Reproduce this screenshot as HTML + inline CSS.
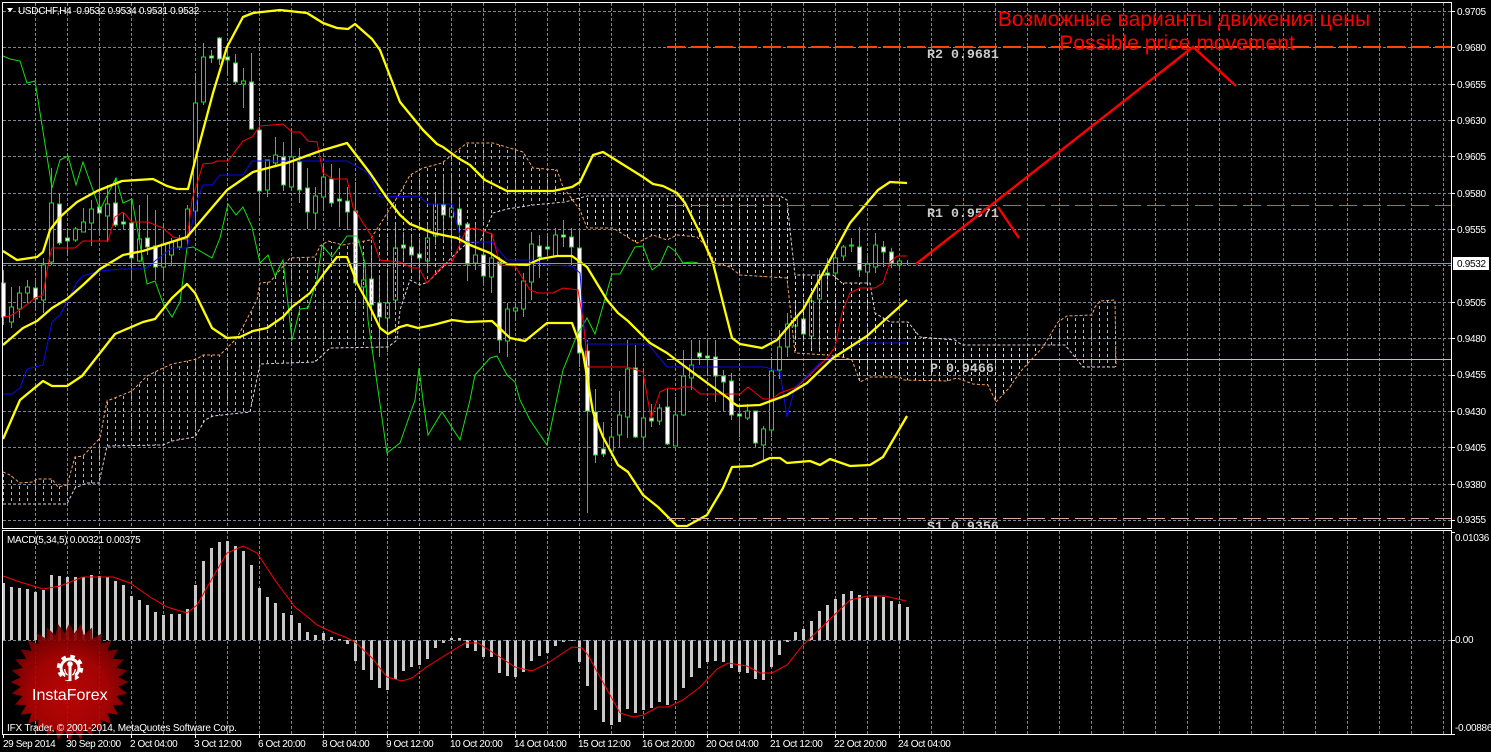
<!DOCTYPE html>
<html><head><meta charset="utf-8"><title>USDCHF,H4</title>
<style>
html,body{margin:0;padding:0;background:#000;width:1491px;height:752px;overflow:hidden}
svg{display:block}
text{font-family:"Liberation Sans",sans-serif;font-size:10px;fill:#fff;white-space:pre}
.m{font-family:"Liberation Mono",monospace;font-size:13.3px;font-weight:bold;fill:#ccc}
.r{font-family:"Liberation Sans",sans-serif;font-size:21.1px;fill:#f00}
.y{fill:none;stroke:#ff0;stroke-width:2.3;stroke-linejoin:round}
.l{fill:none;stroke-width:1}
</style></head><body>
<svg width="1491" height="752" viewBox="0 0 1491 752" xmlns="http://www.w3.org/2000/svg">
<defs>
<pattern id="ho" width="8" height="6" patternUnits="userSpaceOnUse"><rect x="3" width="1" height="3" fill="#f4a460"/></pattern>
<pattern id="hp" width="8" height="6" patternUnits="userSpaceOnUse"><rect x="3" width="1" height="3" fill="#e4cfe0"/></pattern>
<clipPath id="co"><rect x="3" y="3" width="565" height="525"/><rect x="1050" y="3" width="100" height="525"/></clipPath>
<clipPath id="cp"><rect x="568" y="3" width="482" height="525"/></clipPath>
<clipPath id="main"><rect x="3" y="3" width="1448" height="525"/></clipPath>
<radialGradient id="lg" gradientUnits="userSpaceOnUse" cx="69" cy="695" r="78"><stop offset="0" stop-color="#c80606"/><stop offset=".5" stop-color="#b00404"/><stop offset="1" stop-color="#5c0000"/></radialGradient>
</defs>
<rect width="1491" height="752" fill="#000"/>

<!-- grid -->
<path shape-rendering="crispEdges" fill="none" stroke="#778899" stroke-dasharray="3 2" d="M3 11.5H1451M3 47.5H1451M3 84.5H1451M3 120.5H1451M3 156.5H1451M3 193.5H1451M3 229.5H1451M3 265.5H1451M3 302.5H1451M3 338.5H1451M3 375.5H1451M3 411.5H1451M3 447.5H1451M3 484.5H1451M3 520.5H1451M3 640.5H1451"/>
<path shape-rendering="crispEdges" fill="none" stroke="#778899" stroke-dasharray="3 2" d="M35.5 3V528M67.5 3V528M99.5 3V528M131.5 3V528M163.5 3V528M195.5 3V528M227.5 3V528M259.5 3V528M291.5 3V528M323.5 3V528M355.5 3V528M387.5 3V528M419.5 3V528M451.5 3V528M483.5 3V528M515.5 3V528M547.5 3V528M579.5 3V528M611.5 3V528M643.5 3V528M675.5 3V528M707.5 3V528M739.5 3V528M771.5 3V528M803.5 3V528M835.5 3V528M867.5 3V528M899.5 3V528M931.5 3V528M963.5 3V528M995.5 3V528M1027.5 3V528M1059.5 3V528M1091.5 3V528M1123.5 3V528M1155.5 3V528M1187.5 3V528M1219.5 3V528M1251.5 3V528M1283.5 3V528M1315.5 3V528M1347.5 3V528M1379.5 3V528M1411.5 3V528M1443.5 3V528"/>
<path shape-rendering="crispEdges" fill="none" stroke="#778899" stroke-dasharray="3 2" d="M35.5 531V734M67.5 531V734M99.5 531V734M131.5 531V734M163.5 531V734M195.5 531V734M227.5 531V734M259.5 531V734M291.5 531V734M323.5 531V734M355.5 531V734M387.5 531V734M419.5 531V734M451.5 531V734M483.5 531V734M515.5 531V734M547.5 531V734M579.5 531V734M611.5 531V734M643.5 531V734M675.5 531V734M707.5 531V734M739.5 531V734M771.5 531V734M803.5 531V734M835.5 531V734M867.5 531V734M899.5 531V734M931.5 531V734M963.5 531V734M995.5 531V734M1027.5 531V734M1059.5 531V734M1091.5 531V734M1123.5 531V734M1155.5 531V734M1187.5 531V734M1219.5 531V734M1251.5 531V734M1283.5 531V734M1315.5 531V734M1347.5 531V734M1379.5 531V734M1411.5 531V734M1443.5 531V734"/>

<!-- candle wicks -->
<path shape-rendering="crispEdges" fill="none" stroke="#14e014" d="M3.5 270V325M11.5 287V328M19.5 286V318M27.5 280V303M35.5 280V310M43.5 258V313M51.5 168V265M59.5 193V245M67.5 230V253M75.5 227V242M83.5 208V232M91.5 200V246M99.5 170V233M107.5 185V242M115.5 178V227M123.5 213V229M131.5 200V280M139.5 205V262M147.5 195V255M155.5 210V280M163.5 223V280M171.5 238V266M179.5 235V250M187.5 205V245M195.5 75V235M203.5 43V105M211.5 50V63M219.5 37V65M227.5 45V75M235.5 54V84M243.5 68V108M251.5 53V130M259.5 117V213M267.5 160V197M275.5 137V165M283.5 142V191M291.5 129V190M299.5 148V203M307.5 168V229M315.5 187V229M323.5 165V210M331.5 164V207M339.5 168V227M347.5 187V230M355.5 182V285M363.5 262V305M371.5 245V320M379.5 275V357M387.5 270V352M395.5 225V310M403.5 232V262M411.5 237V270M419.5 240V280M427.5 223V273M435.5 193V245M443.5 177V240M451.5 177V235M459.5 197V240M467.5 223V281M475.5 223V270M483.5 230V283M491.5 233V293M499.5 257V353M507.5 303V357M515.5 302V321M523.5 273V317M531.5 232V300M539.5 235V278M547.5 236V256M555.5 228V257M563.5 220V247M571.5 228V265M579.5 230V367M587.5 340V513M595.5 389V463M603.5 422V457M611.5 427V456M619.5 391V447M627.5 340V438M635.5 345V438M643.5 370V450M651.5 404V427M659.5 404V425M667.5 389V445M675.5 397V445M683.5 350V416M691.5 340V390M699.5 340V365M707.5 340V373M715.5 340V402M723.5 370V412M731.5 373V420M739.5 403V437M747.5 404V420M755.5 411V447M763.5 426V461M771.5 357V437M779.5 330V379M787.5 313V357M795.5 300V340M803.5 310V338M811.5 295V350M819.5 270V352M827.5 258V290M835.5 250V280M843.5 245V261M851.5 238V252M859.5 227V277M867.5 255V283M875.5 233V273M883.5 241V267M891.5 248V268M899.5 260V268M907.5 260V265"/>
<!-- hollow bodies -->
<path shape-rendering="crispEdges" fill="#000" stroke="#14e014" d="M9.5 307V322h4V307zM17.5 293V309h4V293zM25.5 287V293h4V287zM41.5 265V300h4V265zM49.5 203V262h4V203zM73.5 229V240h4V229zM81.5 222V232h4V222zM89.5 209V223h4V209zM105.5 204V216h4V204zM137.5 239V261h4V239zM161.5 244V267h4V244zM169.5 242V255h4V242zM177.5 240V247h4V240zM185.5 209V237h4V209zM193.5 103V211h4V103zM201.5 57V102h4V57zM241.5 81V84h4V81zM265.5 160V190h4V160zM273.5 155V163h4V155zM289.5 157V187h4V157zM313.5 196V213h4V196zM321.5 177V197h4V177zM361.5 280V287h4V280zM385.5 303V318h4V303zM393.5 248V300h4V248zM425.5 238V261h4V238zM433.5 204V236h4V204zM449.5 208V217h4V208zM473.5 255V263h4V255zM489.5 258V277h4V258zM505.5 309V341h4V309zM513.5 308V311h4V308zM521.5 281V309h4V281zM529.5 244V282h4V244zM553.5 235V256h4V235zM609.5 437V451h4V437zM617.5 415V435h4V415zM625.5 369V417h4V369zM641.5 418V437h4V418zM657.5 408V421h4V408zM673.5 415V446h4V415zM681.5 376V415h4V376zM689.5 365V378h4V365zM745.5 411V418h4V411zM761.5 429V445h4V429zM769.5 371V430h4V371zM777.5 347V370h4V347zM785.5 324V347h4V324zM793.5 318V326h4V318zM809.5 301V336h4V301zM817.5 275V299h4V275zM833.5 258V273h4V258zM841.5 247V256h4V247zM865.5 264V272h4V264zM873.5 245V267h4V245zM897.5 261V265h4V261z"/>
<!-- filled bodies -->
<path shape-rendering="crispEdges" fill="#fff" stroke="#14e014" d="M1.5 283V317h4V283zM33.5 288V299h4V288zM57.5 204V243h4V204zM65.5 238V241h4V238zM97.5 207V213h4V207zM113.5 203V225h4V203zM121.5 222V224h4V222zM129.5 223V258h4V223zM145.5 238V247h4V238zM153.5 246V267h4V246zM209.5 56V58h4V56zM217.5 38V59h4V38zM225.5 57V60h4V57zM233.5 63V82h4V63zM249.5 82V129h4V82zM257.5 130V191h4V130zM281.5 157V185h4V157zM297.5 162V190h4V162zM305.5 188V212h4V188zM329.5 179V203h4V179zM337.5 199V201h4V199zM345.5 201V212h4V201zM353.5 211V283h4V211zM369.5 279V305h4V279zM377.5 303V317h4V303zM401.5 245V248h4V245zM409.5 247V255h4V247zM417.5 254V258h4V254zM441.5 205V215h4V205zM457.5 209V225h4V209zM465.5 224V264h4V224zM481.5 255V276h4V255zM497.5 262V340h4V262zM537.5 246V257h4V246zM545.5 247V249h4V247zM561.5 235V237h4V235zM569.5 237V247h4V237zM577.5 248V353h4V248zM585.5 351V411h4V351zM593.5 412V455h4V412zM601.5 449V454h4V449zM633.5 368V437h4V368zM649.5 418V421h4V418zM665.5 407V444h4V407zM697.5 353V357h4V353zM705.5 356V358h4V356zM713.5 357V376h4V357zM721.5 376V382h4V376zM729.5 381V415h4V381zM737.5 414V416h4V414zM753.5 411V443h4V411zM801.5 319V334h4V319zM825.5 273V275h4V273zM849.5 245V246h4V245zM857.5 247V270h4V247zM881.5 247V252h4V247zM889.5 252V263h4V252z"/>

<!-- cloud -->
<polygon clip-path="url(#co)" fill="url(#ho)" points="3,472 10,475 20,483 33,482 37,479 52,479 58,487 67,485 75,457 83,456 100,438 107,401 132,391 147,376 163,368 172,364 197,359 203,355 220,355 237,338 257,300 260,283 270,282 290,258 315,257 320,246 328,241 343,245 370,240 400,193 410,175 423,168 442,163 458,150 467,143 493,143 523,152 533,168 557,170 563,187 580,210 587,228 613,228 637,243 653,235 667,240 677,235 697,237 707,247 715,263 730,267 740,275 787,278 795,353 827,355 842,357 852,360 860,382 870,377 900,377 903,380 947,381 957,378 973,384 988,385 996,402 1010,387 1020,372 1043,347 1058,322 1067,316 1092,315 1095,307 1100,301 1115,300 1116,367 1083,367 1065,345 962,345 955,340 920,337 908,322 890,322 875,313 870,283 842,283 833,275 795,275 790,230 787,200 780,196 587,196 565,202 533,205 507,209 493,213 480,242 467,243 452,257 443,267 428,282 420,285 410,280 400,310 397,340 388,347 330,348 315,362 260,364 250,412 213,416 205,420 195,437 172,441 163,445 107,446 99,483 87,483 75,488 67,504 3,504"/>
<polygon clip-path="url(#cp)" fill="url(#hp)" points="3,472 10,475 20,483 33,482 37,479 52,479 58,487 67,485 75,457 83,456 100,438 107,401 132,391 147,376 163,368 172,364 197,359 203,355 220,355 237,338 257,300 260,283 270,282 290,258 315,257 320,246 328,241 343,245 370,240 400,193 410,175 423,168 442,163 458,150 467,143 493,143 523,152 533,168 557,170 563,187 580,210 587,228 613,228 637,243 653,235 667,240 677,235 697,237 707,247 715,263 730,267 740,275 787,278 795,353 827,355 842,357 852,360 860,382 870,377 900,377 903,380 947,381 957,378 973,384 988,385 996,402 1010,387 1020,372 1043,347 1058,322 1067,316 1092,315 1095,307 1100,301 1115,300 1116,367 1083,367 1065,345 962,345 955,340 920,337 908,322 890,322 875,313 870,283 842,283 833,275 795,275 790,230 787,200 780,196 587,196 565,202 533,205 507,209 493,213 480,242 467,243 452,257 443,267 428,282 420,285 410,280 400,310 397,340 388,347 330,348 315,362 260,364 250,412 213,416 205,420 195,437 172,441 163,445 107,446 99,483 87,483 75,488 67,504 3,504"/>
<polyline class="l" stroke="#f4a460" stroke-dasharray="3 2" points="3,472 10,475 20,483 33,482 37,479 52,479 58,487 67,485 75,457 83,456 100,438 107,401 132,391 147,376 163,368 172,364 197,359 203,355 220,355 237,338 257,300 260,283 270,282 290,258 315,257 320,246 328,241 343,245 370,240 400,193 410,175 423,168 442,163 458,150 467,143 493,143 523,152 533,168 557,170 563,187 580,210 587,228 613,228 637,243 653,235 667,240 677,235 697,237 707,247 715,263 730,267 740,275 787,278 795,353 827,355 842,357 852,360 860,382 870,377 900,377 903,380 947,381 957,378 973,384 988,385 996,402 1010,387 1020,372 1043,347 1058,322 1067,316 1092,315 1095,307 1100,301 1115,300 1116,367"/>
<polyline class="l" stroke="#e4cfe0" stroke-dasharray="3 2" points="3,504 67,504 75,488 87,483 99,483 107,446 163,445 172,441 195,437 205,420 213,416 250,412 260,364 315,362 330,348 388,347 397,340 400,310 410,280 420,285 428,282 443,267 452,257 467,243 480,242 493,213 507,209 533,205 565,202 587,196 780,196 787,200 790,230 795,275 833,275 842,283 870,283 875,313 890,322 908,322 920,337 955,340 962,345 1065,345 1083,367 1116,367"/>

<!-- chikou -->
<polyline class="l" stroke="#14e014" points="3,56 10,59 20,61 27,83 35,81 52,188 60,160 68,156 76,185 83,162 100,210 116,178 123,203 132,199 147,284 155,281 163,303 172,317 180,302 187,248 193,247 212,258 220,238 228,204 236,215 243,207 252,227 260,263 268,255 275,276 283,260 292,340 300,309 308,308 317,280 322,245 332,257 347,236 357,236 365,263 368,320 387,453 400,443 415,400 419,368 423,400 428,435 442,412 460,440 470,400 475,375 490,358 497,356 507,375 515,382 520,400 530,420 547,445 563,370 577,335 587,318 595,334 612,274 620,274 635,247 643,246 652,270 660,264 668,246 675,251 683,263 692,262 698,263"/>
<!-- kijun -->
<polyline class="l" stroke="#0a0af0" points="3,394 12,394 20,388 27,369 43,365 52,322 60,315 68,300 77,282 83,276 100,271 122,269 145,269 160,257 172,248 187,248 197,200 203,185 212,185 220,175 243,175 252,161 347,161 368,173 380,197 419,196 428,204 452,204 460,236 467,242 492,242 507,260 532,260 545,265 572,266 580,273 585,337 588,344 648,344 667,367 765,367 780,372 787,417 795,387 820,363 837,355 860,343 907,343"/>
<!-- tenkan -->
<polyline class="l" stroke="#f00" points="3,317 10,316 20,310 35,298 43,295 49,260 52,248 75,248 83,241 108,241 115,217 123,212 132,222 148,222 163,228 173,237 187,240 192,200 203,164 213,163 217,161 228,161 243,141 252,137 260,126 283,124 292,132 300,132 308,141 317,142 323,173 333,179 347,179 353,207 372,237 380,260 400,262 412,268 419,268 427,283 443,265 452,262 467,228 478,229 492,234 500,265 515,266 530,290 538,293 553,293 563,288 578,290 583,320 588,367 627,367 643,372 651,418 660,392 668,388 678,389 683,387 692,387 700,394 740,394 748,387 763,399 772,399 780,393 797,387 827,358 835,347 842,313 850,293 860,288 875,288 883,283 890,262 897,256 907,256"/>

<!-- bollinger -->
<polyline class="y" points="3,251 17,260 37,257 43,252 50,230 60,217 77,202 97,191 122,181 153,179 167,186 177,189 188,189 197,153 213,93 227,47 243,17 253,13 280,10 307,13 323,23 337,28 348,29 355,24 372,39 380,50 400,102 423,130 437,144 443,147 458,158 470,165 485,180 507,191 553,191 572,187 580,182 593,155 603,152 627,167 643,177 653,184 663,186 677,193 685,203 700,233 713,263 723,303 732,338 740,344 762,348 777,340 800,313 803,310 850,223 878,190 890,182 907,183"/>
<polyline class="y" points="3,345 23,328 37,321 52,308 67,299 83,285 100,269 123,255 143,251 187,237 227,190 253,172 287,163 320,151 347,143 370,173 387,198 400,215 410,224 433,233 457,238 470,245 490,253 507,264 527,265 540,259 557,256 572,256 587,267 607,300 618,313 628,321 650,343 667,353 687,368 710,385 728,398 733,403 738,406 760,405 787,395 807,383 833,358 867,336 907,300"/>
<polyline class="y" points="3,439 20,400 43,381 52,386 67,386 82,376 100,353 115,334 143,322 155,319 172,298 187,284 195,293 212,328 227,338 240,337 253,331 267,328 283,317 292,307 310,293 325,272 337,257 347,257 357,283 370,307 380,328 388,334 400,327 407,325 418,328 433,325 452,320 467,322 492,321 510,338 525,341 547,323 572,323 583,353 593,412 603,437 618,465 628,472 643,495 658,507 677,526 687,526 707,515 723,488 732,467 752,466 770,458 780,458 787,463 810,461 820,465 830,459 850,466 870,465 883,457 893,440 907,416"/>

<!-- objects -->
<g shape-rendering="crispEdges" fill="none">
<path stroke="#ff4500" stroke-width="2" stroke-dasharray="18 6" d="M667 47H1451"/>
<path stroke="#e0592a" stroke-dasharray="18 6" d="M667 205.5H1451"/>
<path stroke="#ecc43c" d="M667 359.5H1451"/>
<path stroke="#d8a898" stroke-dasharray="18 6" d="M667 518.5H1451"/>
<path stroke="#8a9bab" d="M3 263.5H1451"/>
</g>
<g clip-path="url(#main)">
<text class="m" x="927" y="58">R2 0.9681</text>
<text class="m" x="927" y="217">R1 0.9571</text>
<text class="m" x="930" y="372">P 0.9466</text>
<text class="m" x="927" y="530">S1 0.9356</text>
</g>
<polyline fill="none" stroke="#f00" stroke-width="2.4" points="916,264 1193,47 1236,86"/>
<line x1="998" y1="207" x2="1019" y2="238" stroke="#f00" stroke-width="2.4"/>
<text class="r" x="1184" y="26" text-anchor="middle">Возможные варианты движения цены</text>
<text class="r" x="1177" y="50" text-anchor="middle">Possible price movement</text>

<!-- MACD bars -->
<path shape-rendering="crispEdges" fill="none" stroke="#c8c8c8" stroke-width="3" d="M3.5 640V583M11.5 640V587M19.5 640V588M27.5 640V589M35.5 640V592M43.5 640V590M51.5 640V575M59.5 640V576M67.5 640V577M75.5 640V577M83.5 640V577M91.5 640V575M99.5 640V576M107.5 640V577M115.5 640V581M123.5 640V585M131.5 640V596M139.5 640V600M147.5 640V605M155.5 640V612M163.5 640V615M171.5 640V614M179.5 640V614M187.5 640V609M195.5 640V585M203.5 640V561M211.5 640V548M219.5 640V542M227.5 640V541M235.5 640V546M243.5 640V551M251.5 640V565M259.5 640V588M267.5 640V597M275.5 640V603M283.5 640V613M291.5 640V615M299.5 640V623M307.5 640V632M315.5 640V635M323.5 640V633M331.5 640V637M339.5 640V639M347.5 640V644M355.5 640V661M363.5 640V670M371.5 640V680M379.5 640V688M387.5 640V690M395.5 640V679M403.5 640V671M411.5 640V667M419.5 640V665M427.5 640V659M435.5 640V648M443.5 640V643M451.5 640V638M459.5 640V638M467.5 640V648M475.5 640V651M483.5 640V657M491.5 640V657M499.5 640V673M507.5 640V676M515.5 640V677M523.5 640V672M531.5 640V661M539.5 640V656M547.5 640V653M555.5 640V646M563.5 640V642M571.5 640V641M579.5 640V662M587.5 640V686M595.5 640V710M603.5 640V722M611.5 640V725M619.5 640V722M627.5 640V709M635.5 640V713M643.5 640V710M651.5 640V708M659.5 640V702M667.5 640V705M675.5 640V700M683.5 640V688M691.5 640V677M699.5 640V668M707.5 640V662M715.5 640V661M723.5 640V662M731.5 640V668M739.5 640V672M747.5 640V673M755.5 640V679M763.5 640V680M771.5 640V667M779.5 640V655M787.5 640V642M795.5 640V632M803.5 640V629M811.5 640V621M819.5 640V611M827.5 640V605M835.5 640V599M843.5 640V594M851.5 640V591M859.5 640V595M867.5 640V598M875.5 640V596M883.5 640V597M891.5 640V601M899.5 640V604M907.5 640V607"/>
<path shape-rendering="crispEdges" fill="none" stroke="#778899" stroke-dasharray="3 2" d="M3 640.5H1451"/>
<polyline class="l" stroke="#f00" points="3,576 20,582 43,589 60,586 83,577 113,577 130,583 150,597 167,607 187,613 197,605 213,577 227,553 243,546 257,553 277,583 295,607 310,619 317,625 332,632 345,637 355,642 372,658 387,677 402,681 412,678 425,668 452,651 465,643 478,643 492,652 515,667 532,671 548,663 572,647 582,648 588,655 600,677 620,713 633,717 643,715 658,707 668,707 683,700 700,687 717,669 728,663 747,666 760,673 772,673 787,665 803,645 827,622 850,600 867,596 885,596 906,601"/>

<!-- logo -->
<g transform="translate(69.5 682)" opacity=".92"><polygon transform="translate(-69.5 -682)" fill="url(#lg)" points="69.5,623 74.3,633.2 81,624.1 83.7,635.1 92.1,627.5 92.6,638.8 102.3,633 100.6,644.1 111.2,640.3 107.4,650.9 118.5,649.2 112.7,658.9 124,659.4 116.4,667.8 127.4,670.5 118.3,677.2 128.5,682 118.3,686.8 127.4,693.5 116.4,696.2 124,704.6 112.7,705.1 118.5,714.8 107.4,713.1 111.2,723.7 100.6,719.9 102.3,731 92.6,725.2 92.1,736.5 83.7,728.9 81,739.9 74.3,730.8 69.5,741 64.7,730.8 58,739.9 55.3,728.9 46.9,736.5 46.4,725.2 36.7,731 38.4,719.9 27.8,723.7 31.6,713.1 20.5,714.8 26.3,705.1 15,704.6 22.6,696.2 11.6,693.5 20.7,686.8 10.5,682 20.7,677.2 11.6,670.5 22.6,667.8 15,659.4 26.3,658.9 20.5,649.2 31.6,650.9 27.8,640.3 38.4,644.1 36.7,633 46.4,638.8 46.9,627.5 55.3,635.1 58,624.1 64.7,633.2"/></g>
<g>
<circle cx="70" cy="668" r="11.5" fill="none" stroke="#fff" stroke-width="3.5" stroke-dasharray="4.5 4.53"/>
<circle cx="70" cy="668" r="10.5" fill="#fff"/>
<circle cx="70" cy="668" r="7.5" fill="#a80404"/>
<path d="M65.2 672h9.6v8h-9.6z" fill="#a80404"/>
<circle cx="70" cy="664" r="2.8" fill="#fff"/>
<path d="M70 666V681" stroke="#fff" stroke-width="3"/>
<path d="M64.5 669q1 5 3.2 6M75.5 669q-1 5-3.2 6" fill="none" stroke="#fff" stroke-width="1.4"/>
</g>
<text x="32" y="700" style="font-size:16px">InstaForex</text>

<!-- frames -->
<g shape-rendering="crispEdges" fill="none" stroke="#fff">
<rect x="2.5" y="2.5" width="1449" height="526"/>
<rect x="2.5" y="530.5" width="1449" height="204"/>
<path d="M1452 11.5h3M1452 47.5h3M1452 84.5h3M1452 120.5h3M1452 156.5h3M1452 193.5h3M1452 229.5h3M1452 302.5h3M1452 338.5h3M1452 375.5h3M1452 411.5h3M1452 447.5h3M1452 484.5h3M1452 520.5h3M1452 532.5h3M1452 640.5h3M1452 734.5h3"/>
<path d="M3.5 735v3M67.5 735v3M131.5 735v3M195.5 735v3M259.5 735v3M323.5 735v3M387.5 735v3M451.5 735v3M515.5 735v3M579.5 735v3M643.5 735v3M707.5 735v3M771.5 735v3M835.5 735v3M899.5 735v3"/>
</g>

<!-- header -->
<polygon points="7,8 13,8 10,12" fill="#fff"/>
<text x="18" y="14" style="letter-spacing:-.3px">USDCHF,H4  0.9532 0.9534 0.9531 0.9532</text>
<text x="7" y="543" style="letter-spacing:-.3px">MACD(5,34,5) 0.00321 0.00375</text>
<text x="7" y="731" style="letter-spacing:-.2px">IFX Trader, © 2001-2014, MetaQuotes Software Corp.</text>

<!-- price axis -->
<g style="letter-spacing:-.3px">
<text x="1457" y="15">0.9705</text>
<text x="1457" y="51">0.9680</text>
<text x="1457" y="88">0.9655</text>
<text x="1457" y="124">0.9630</text>
<text x="1457" y="160">0.9605</text>
<text x="1457" y="197">0.9580</text>
<text x="1457" y="233">0.9555</text>
<text x="1457" y="306">0.9505</text>
<text x="1457" y="342">0.9480</text>
<text x="1457" y="378">0.9455</text>
<text x="1457" y="415">0.9430</text>
<text x="1457" y="451">0.9405</text>
<text x="1457" y="488">0.9380</text>
<text x="1457" y="523">0.9355</text>
<text x="1455" y="541">0.01036</text>
<text x="1455" y="643">0.00</text>
<text x="1455" y="731">-0.00886</text>
</g>
<rect x="1453" y="257" width="36" height="13" fill="#fff"/>
<text x="1457" y="267" style="fill:#000;letter-spacing:-.3px">0.9532</text>

<!-- time axis -->
<g style="letter-spacing:-.4px">
<text x="3" y="747">29 Sep 2014</text>
<text x="66" y="747">30 Sep 20:00</text>
<text x="130" y="747">2 Oct 04:00</text>
<text x="194" y="747">3 Oct 12:00</text>
<text x="258" y="747">6 Oct 20:00</text>
<text x="322" y="747">8 Oct 04:00</text>
<text x="386" y="747">9 Oct 12:00</text>
<text x="450" y="747">10 Oct 20:00</text>
<text x="514" y="747">14 Oct 04:00</text>
<text x="578" y="747">15 Oct 12:00</text>
<text x="642" y="747">16 Oct 20:00</text>
<text x="706" y="747">20 Oct 04:00</text>
<text x="770" y="747">21 Oct 12:00</text>
<text x="834" y="747">22 Oct 20:00</text>
<text x="898" y="747">24 Oct 04:00</text>
</g>
</svg>
</body></html>
